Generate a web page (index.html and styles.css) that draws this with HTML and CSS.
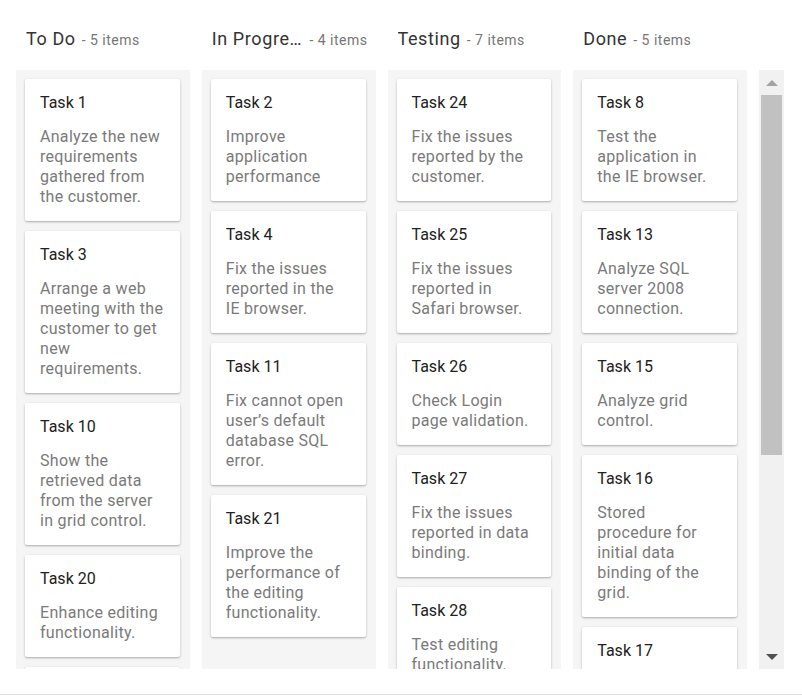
FILE: index.html
```html
<!DOCTYPE html>
<html>
<head>
<meta charset="utf-8">
<link rel="stylesheet" href="styles.css">
</head>
<body>
<div class="kanban">
  <div class="header-row">
    <div class="header-cell"><span class="h-title">To Do</span><span class="h-count">- 5 items</span></div>
    <div class="header-cell"><span class="h-title">In Progress</span><span class="h-count">- 4 items</span></div>
    <div class="header-cell"><span class="h-title">Testing</span><span class="h-count">- 7 items</span></div>
    <div class="header-cell"><span class="h-title">Done</span><span class="h-count">- 5 items</span></div>
  </div>
  <div class="content-row">
    <div class="columns">
      <div class="column">
        <div class="card"><div class="c-title">Task 1</div><div class="c-text">Analyze the new requirements gathered from the customer.</div></div>
        <div class="card"><div class="c-title">Task 3</div><div class="c-text">Arrange a web meeting with the customer to get new requirements.</div></div>
        <div class="card"><div class="c-title">Task 10</div><div class="c-text">Show the retrieved data from the server in grid control.</div></div>
        <div class="card"><div class="c-title">Task 20</div><div class="c-text">Enhance editing functionality.</div></div>
        <div class="card"><div class="c-title">Task 29</div><div class="c-text">Fix the issues reported by the customer.</div></div>
      </div>
      <div class="column">
        <div class="card"><div class="c-title">Task 2</div><div class="c-text">Improve application performance</div></div>
        <div class="card"><div class="c-title">Task 4</div><div class="c-text">Fix the issues reported in the IE browser.</div></div>
        <div class="card"><div class="c-title">Task 11</div><div class="c-text">Fix cannot open user’s default database SQL error.</div></div>
        <div class="card"><div class="c-title">Task 21</div><div class="c-text">Improve the performance of the editing functionality.</div></div>
      </div>
      <div class="column">
        <div class="card"><div class="c-title">Task 24</div><div class="c-text">Fix the issues reported by the customer.</div></div>
        <div class="card"><div class="c-title">Task 25</div><div class="c-text">Fix the issues reported in Safari browser.</div></div>
        <div class="card"><div class="c-title">Task 26</div><div class="c-text">Check Login page validation.</div></div>
        <div class="card"><div class="c-title">Task 27</div><div class="c-text">Fix the issues reported in data binding.</div></div>
        <div class="card"><div class="c-title">Task 28</div><div class="c-text">Test editing functionality.</div></div>
        <div class="card"><div class="c-title">Task 32</div><div class="c-text">Check filtering validation.</div></div>
      </div>
      <div class="column">
        <div class="card"><div class="c-title">Task 8</div><div class="c-text">Test the application in the IE browser.</div></div>
        <div class="card"><div class="c-title">Task 13</div><div class="c-text">Analyze SQL server 2008 connection.</div></div>
        <div class="card"><div class="c-title">Task 15</div><div class="c-text">Analyze grid control.</div></div>
        <div class="card"><div class="c-title">Task 16</div><div class="c-text">Stored procedure for initial data binding of the grid.</div></div>
        <div class="card"><div class="c-title">Task 17</div><div class="c-text">Analyze stored procedures.</div></div>
      </div>
    </div>
    <div class="scrollbar">
      <div class="sb-arrow sb-up"></div>
      <div class="sb-track"><div class="sb-thumb"></div></div>
      <div class="sb-arrow sb-down"></div>
    </div>
  </div>
</div>
</body>
</html>
```
FILE: styles.css
```css
html, body {
  margin: 0;
  padding: 0;
  background: #ffffff;
}
body {
  font-family: Roboto, "Liberation Sans", sans-serif;
  width: 802px;
  height: 697px;
  overflow: hidden;
}
.kanban {
  height: 695px;
  border-bottom: 1px solid #e0e0e0;
  box-sizing: border-box;
  padding-left: 16px;
}
.header-row {
  display: grid;
  grid-template-columns: repeat(4, 1fr);
  column-gap: 12px;
  width: 731px;
  height: 70px;
  box-sizing: border-box;
  padding-top: 28px;
}
.header-cell {
  display: flex;
  align-items: baseline;
  padding: 0 8px 0 10px;
  min-width: 0;
  line-height: 22px;
}
.h-title {
  font-size: 18px;
  letter-spacing: 0.6px;
  color: #333333;
  white-space: nowrap;
  overflow: hidden;
  text-overflow: ellipsis;
  min-width: 0;
  flex: 0 1 auto;
}
.h-count {
  font-size: 14px;
  letter-spacing: 0.5px;
  color: #757575;
  white-space: nowrap;
  margin-left: 6px;
  flex-shrink: 0;
}
.content-row {
  display: flex;
  gap: 12px;
  height: 599px;
}
.columns {
  display: grid;
  grid-template-columns: repeat(4, 1fr);
  column-gap: 12px;
  width: 731px;
  height: 599px;
  overflow: hidden;
}
.column {
  background: #f5f5f5;
  padding: 9px 10px 0 9px;
  display: flex;
  flex-direction: column;
  gap: 10px;
  overflow: hidden;
  min-width: 0;
}
.card {
  background: #ffffff;
  border-radius: 2px;
  box-shadow: 0 1px 3px 0 rgba(0,0,0,0.2), 0 1px 1px 0 rgba(0,0,0,0.12);
  padding: 14px 15px;
  flex-shrink: 0;
}
.c-title {
  font-size: 16px;
  line-height: 20px;
  color: #212121;
  margin-bottom: 14px;
}
.c-text {
  font-size: 16px;
  line-height: 20px;
  letter-spacing: 0.3px;
  color: #7a7a7a;
}
.scrollbar {
  width: 25px;
  background: #f1f1f1;
  display: flex;
  flex-direction: column;
  align-items: center;
}
.sb-arrow {
  height: 25px;
  width: 25px;
  display: flex;
  align-items: center;
  justify-content: center;
  flex-shrink: 0;
}
.sb-up::before {
  content: "";
  border-left: 6px solid transparent;
  border-right: 6px solid transparent;
  border-bottom: 6px solid #a3a3a3;
}
.sb-down::before {
  content: "";
  border-left: 6px solid transparent;
  border-right: 6px solid transparent;
  border-top: 6px solid #505050;
}
.sb-track {
  flex: 1;
  width: 21px;
}
.sb-thumb {
  height: 360px;
  background: #c1c1c1;
}
```
